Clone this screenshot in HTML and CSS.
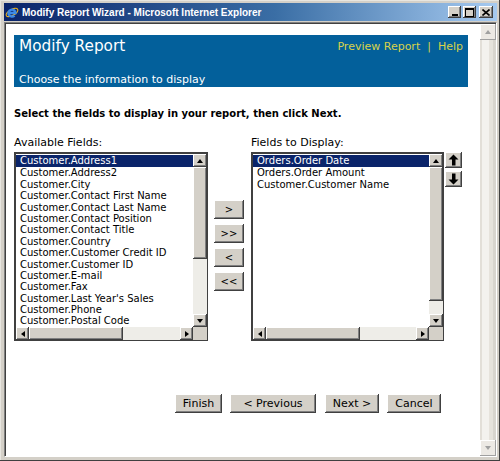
FILE: index.html
```html
<!DOCTYPE html>
<html>
<head>
<meta charset="utf-8">
<title>Modify Report Wizard</title>
<link rel="stylesheet" href="styles.css">
</head>
<body>
<div class="window">
  <div class="titlebar">
    <svg class="ie-icon" width="14" height="14" viewBox="0 0 14 14">
      <ellipse cx="7" cy="7.5" rx="6.5" ry="3" fill="none" stroke="#e8b020" stroke-width="1.2" transform="rotate(-30 7 7.5)"/>
      <path d="M3.5 8h7a3.5 3.5 0 1 0-1 2.6" fill="none" stroke="#3d8ae6" stroke-width="2.4"/>
    </svg>
    <span class="title">Modify Report Wizard - Microsoft Internet Explorer</span>
    <div class="caption-btns">
      <span class="cbtn"><svg width="8" height="7" viewBox="0 0 8 7"><rect x="1" y="5" width="6" height="2" fill="#000"/></svg></span>
      <span class="cbtn"><svg width="9" height="9" viewBox="0 0 9 9"><rect x="0.5" y="0.5" width="8" height="8" fill="none" stroke="#000"/><rect x="0" y="0" width="9" height="2" fill="#000"/></svg></span>
      <span class="cbtn cbtn-close"><svg width="8" height="7" viewBox="0 0 8 7"><path d="M0.5 0.5l7 6M7.5 0.5l-7 6" stroke="#000" stroke-width="1.6"/></svg></span>
    </div>
  </div>
  <div class="client">
    <div class="page">
      <div class="header">
        <div class="header-top">
          <span class="h-title">Modify Report</span>
          <span class="links"><span class="link">Preview Report</span><span class="sep">|</span><span class="link">Help</span></span>
        </div>
        <div class="h-sub">Choose the information to display</div>
      </div>
      <p class="instr">Select the fields to display in your report, then click Next.</p>
      <div class="fields">
        <div class="col col-left">
          <div class="label">Available Fields:</div>
          <div class="listbox">
            <div class="list-main">
              <div class="items">
                <div class="item selected">Customer.Address1</div>
                <div class="item">Customer.Address2</div>
                <div class="item">Customer.City</div>
                <div class="item">Customer.Contact First Name</div>
                <div class="item">Customer.Contact Last Name</div>
                <div class="item">Customer.Contact Position</div>
                <div class="item">Customer.Contact Title</div>
                <div class="item">Customer.Country</div>
                <div class="item">Customer.Customer Credit ID</div>
                <div class="item">Customer.Customer ID</div>
                <div class="item">Customer.E-mail</div>
                <div class="item">Customer.Fax</div>
                <div class="item">Customer.Last Year's Sales</div>
                <div class="item">Customer.Phone</div>
                <div class="item">Customer.Postal Code</div>
              </div>
              <div class="vscroll">
                <div class="sb-btn"><span class="tri tri-up"></span></div>
                <div class="sb-thumb thumb-left-v"></div>
                <div class="sb-track"></div>
                <div class="sb-btn"><span class="tri tri-down"></span></div>
              </div>
            </div>
            <div class="hscroll">
              <div class="sb-btn"><span class="tri tri-left"></span></div>
              <div class="sb-thumb thumb-h"></div>
              <div class="sb-track"></div>
              <div class="sb-btn"><span class="tri tri-right"></span></div>
              <div class="sb-corner"></div>
            </div>
          </div>
        </div>
        <div class="move-btns">
          <button class="btn move">&gt;</button>
          <button class="btn move">&gt;&gt;</button>
          <button class="btn move">&lt;</button>
          <button class="btn move">&lt;&lt;</button>
        </div>
        <div class="col col-right">
          <div class="label">Fields to Display:</div>
          <div class="listbox">
            <div class="list-main">
              <div class="items">
                <div class="item selected">Orders.Order Date</div>
                <div class="item">Orders.Order Amount</div>
                <div class="item">Customer.Customer Name</div>
              </div>
              <div class="vscroll">
                <div class="sb-btn"><span class="tri tri-up"></span></div>
                <div class="sb-thumb thumb-right-v"></div>
                <div class="sb-track"></div>
                <div class="sb-btn"><span class="tri tri-down"></span></div>
              </div>
            </div>
            <div class="hscroll">
              <div class="sb-btn"><span class="tri tri-left"></span></div>
              <div class="sb-thumb thumb-h"></div>
              <div class="sb-track"></div>
              <div class="sb-btn"><span class="tri tri-right"></span></div>
              <div class="sb-corner"></div>
            </div>
          </div>
        </div>
        <div class="sort-btns">
          <button class="btn sort"><svg width="11" height="12" viewBox="0 0 11 12"><path d="M5.5 0.5L10.5 5.5H7.5V11.5H4V5.5H0.5Z" fill="#000"/></svg></button>
          <button class="btn sort"><svg width="11" height="12" viewBox="0 0 11 12"><path d="M5.5 11.5L10.5 6.5H7.5V0.5H4V6.5H0.5Z" fill="#000"/></svg></button>
        </div>
      </div>
      <div class="actions">
        <button class="btn action w-finish">Finish</button>
        <button class="btn action w-prev">&lt; Previous</button>
        <button class="btn action w-next">Next &gt;</button>
        <button class="btn action w-cancel">Cancel</button>
      </div>
    </div>
    <div class="page-scroll">
      <div class="ps-btn"><span class="tri tri-up tri-dis"></span></div>
      <div class="ps-track"></div>
      <div class="ps-btn"><span class="tri tri-down tri-dis"></span></div>
    </div>
  </div>
</div>
</body>
</html>
```
FILE: styles.css
```css
* { box-sizing: border-box; }
html, body { margin: 0; padding: 0; }
body {
  font-family: "DejaVu Sans", Verdana, sans-serif;
  font-size: 11px;
  color: #000;
  background: #fff;
}
.window {
  width: 500px;
  height: 461px;
  background: #d4d0c8;
  padding: 3px 3px 4px 4px;
  display: flex;
  flex-direction: column;
  box-shadow: inset -1px -1px #404040, inset 1px 1px #e8e6e0;
}
.titlebar {
  height: 18px;
  flex: none;
  display: flex;
  align-items: center;
  background: linear-gradient(to right, #0a246a 0%, #3a6ea5 55%, #a6caf0 100%);
  padding: 0 4px 0 1px;
  margin-bottom: 1px;
}
.ie-icon { flex: none; margin-right: 3px; }
.title {
  color: #fff;
  font-family: "Liberation Sans", Arial, sans-serif;
  font-weight: bold;
  font-size: 10px;
  white-space: nowrap;
  flex: 1;
}
.caption-btns { display: flex; align-items: center; gap: 2px; }
.cbtn {
  width: 13px;
  height: 12px;
  background: #d4d0c8;
  display: flex;
  align-items: center;
  justify-content: center;
  box-shadow: inset -1px -1px #404040, inset 1px 1px #fff, inset -2px -2px #808080;
}
.cbtn-close { width: 14px; margin-left: 1px; }
.client {
  flex: 1;
  display: flex;
  border: 1px solid #808080;
  border-right-color: #fff;
  border-bottom-color: #fff;
  box-shadow: inset 1px 1px #404040;
  padding: 1px 0 0 1px;
  min-height: 0;
}
.page {
  flex: 1;
  background: #fff;
  padding: 11px 12px 0 8px;
  min-width: 0;
}
.header {
  background: #03609b;
  height: 52px;
  padding: 2px 5px 1px 5px;
  display: flex;
  flex-direction: column;
  justify-content: space-between;
  color: #fff;
}
.header-top { display: flex; justify-content: space-between; align-items: flex-start; }
.h-title { font-size: 15.3px; line-height: 18px; }
.links { color: #d8d24a; font-size: 11px; line-height: 13px; margin-top: 3px; }
.sep { margin: 0 7px; }
.h-sub { font-size: 11px; line-height: 13px; }
.instr {
  margin: 20px 0 16px;
  font-weight: bold;
  font-size: 10px;
  line-height: 13px;
  white-space: nowrap;
}
.fields {
  display: flex;
  align-items: flex-start;
}
.label { font-size: 11px; line-height: 13px; margin-bottom: 3px; }
.col-left { width: 194px; }
.col-right { width: 193px; margin-left: 7px; }
.listbox {
  height: 189px;
  border: 1px solid #808080;
  border-right-color: #d4d0c8;
  border-bottom-color: #d4d0c8;
  box-shadow: inset 1px 1px #404040;
  padding: 1px 0 0 1px;
  display: flex;
  flex-direction: column;
  background: #fff;
  outline: 1px solid #404040;
  outline-offset: -1px;
}
.list-main { flex: 1; display: flex; min-height: 0; }
.items { flex: 1; min-width: 0; overflow: hidden; padding-top: 1px; }
.item {
  font-size: 10px;
  line-height: 11.4px;
  height: 11.4px;
  padding-left: 4px;
  white-space: nowrap;
}
.item.selected { background: #0a246a; color: #fff; height: 12.4px; line-height: 12.4px; }
.vscroll { width: 14px; display: flex; flex-direction: column; }
.hscroll { height: 13px; display: flex; flex: none; }
.sb-btn, .ps-btn {
  flex: none;
  width: 14px;
  height: 13px;
  background: #d4d0c8;
  box-shadow: inset -1px -1px #404040, inset 1px 1px #fff, inset -2px -2px #808080;
  display: flex;
  align-items: center;
  justify-content: center;
}
.hscroll .sb-btn { width: 13px; }
.sb-thumb {
  background: #d4d0c8;
  box-shadow: inset -1px -1px #404040, inset 1px 1px #fff, inset -2px -2px #808080;
  flex: none;
}
.thumb-left-v { height: 92px; }
.thumb-right-v { height: 134px; }
.thumb-h { width: 94px; }
.sb-track { flex: 1; background: #eeede8; }
.sb-corner { width: 14px; background: #d4d0c8; flex: none; }
.tri { width: 0; height: 0; border-style: solid; }
.tri-up { border-width: 0 3.5px 4px 3.5px; border-color: transparent transparent #000 transparent; }
.tri-down { border-width: 4px 3.5px 0 3.5px; border-color: #000 transparent transparent transparent; }
.tri-left { border-width: 3.5px 4px 3.5px 0; border-color: transparent #000 transparent transparent; }
.tri-right { border-width: 3.5px 0 3.5px 4px; border-color: transparent transparent transparent #000; }
.tri-up.tri-dis { border-color: transparent transparent #a0a0a0 transparent; }
.tri-down.tri-dis { border-color: #a0a0a0 transparent transparent transparent; }
.btn {
  font-family: "DejaVu Sans", Verdana, sans-serif;
  font-size: 11px;
  color: #000;
  background: #d4d0c8;
  border: none;
  margin: 0;
  padding: 0;
  box-shadow: inset -1px -1px #404040, inset 1px 1px #fff, inset -2px -2px #808080;
  display: flex;
  align-items: center;
  justify-content: center;
}
.move-btns {
  display: flex;
  flex-direction: column;
  gap: 5px;
  margin-left: 6px;
  margin-top: 64px;
}
.move { width: 30px; height: 19px; font-size: 10px; }
.sort-btns {
  display: flex;
  flex-direction: column;
  gap: 3px;
  margin-left: 1px;
  margin-top: 16px;
}
.sort { width: 17px; height: 16px; }
.actions {
  display: flex;
  justify-content: flex-end;
  margin: 53px 27px 0 0;
}
.action { height: 19px; line-height: 19px; }
.w-finish { width: 47px; }
.w-prev { width: 86px; margin-left: 8px; }
.w-next { width: 54px; margin-left: 9px; }
.w-cancel { width: 54px; margin-left: 8px; }
.page-scroll {
  width: 16px;
  display: flex;
  flex-direction: column;
  background: #d4d0c8;
}
.ps-btn { width: 16px; height: 16px; background: #ece9e4; box-shadow: inset -1px -1px #a0a0a0, inset 1px 1px #fff; }
.ps-track {
  flex: 1;
  background: linear-gradient(to right, #e2dfd8 0, #e2dfd8 2px, #f3f2ee 2px, #f3f2ee 9px, #e6e3dc 9px, #e6e3dc 13px, #d8d5ce 13px);
}
```
